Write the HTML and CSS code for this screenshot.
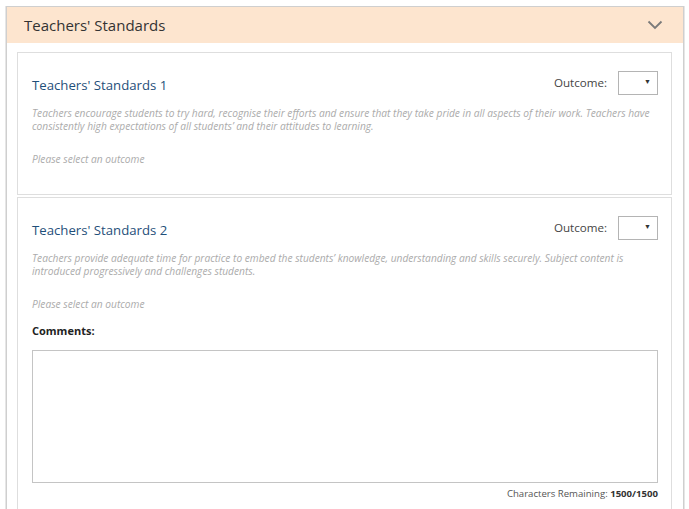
FILE: index.html
```html
<!DOCTYPE html>
<html lang="en">
<head>
    <meta charset="UTF-8">
    <meta name="viewport" content="width=device-width, initial-scale=1.0">
    <title>Teachers' Standards</title>
    <link rel="stylesheet" href="styles.css">
</head>
<body>
    <div class="panel">
        <div class="panel-heading">
            <h2>Teachers' Standards</h2>
            <svg class="chevron" width="16" height="10" viewBox="0 0 16 10">
                <path d="M1.5 1.5 L8 8 L14.5 1.5" fill="none" stroke="#7a7a7a" stroke-width="1.8"/>
            </svg>
        </div>
        <div class="panel-body">
            <div class="standard">
                <div class="standard-top">
                    <h3>Teachers' Standards 1</h3>
                    <label class="outcome">
                        Outcome:
                        <span class="select-wrap"><select></select></span>
                    </label>
                </div>
                <p class="description">Teachers encourage students to try hard, recognise their efforts and ensure that they take pride in all aspects of their work. Teachers have consistently high expectations of all students’ and their attitudes to learning.</p>
                <p class="status">Please select an outcome</p>
            </div>
            <div class="standard">
                <div class="standard-top">
                    <h3>Teachers' Standards 2</h3>
                    <label class="outcome">
                        Outcome:
                        <span class="select-wrap"><select></select></span>
                    </label>
                </div>
                <p class="description">Teachers provide adequate time for practice to embed the students’ knowledge, understanding and skills securely. Subject content is introduced progressively and challenges students.</p>
                <p class="status">Please select an outcome</p>
                <div class="comments">
                    <label for="comments-2">Comments:</label>
                    <textarea id="comments-2"></textarea>
                    <div class="remaining">Characters Remaining: <b>1500/1500</b></div>
                </div>
            </div>
        </div>
    </div>
</body>
</html>
```

FILE: styles.css
```css
body {
    font-family: 'Open Sans', 'Liberation Sans', sans-serif;
    background-color: #fff;
    color: #333;
    margin: 0;
    padding: 6px 5px 0 6px;
}
.panel {
    border: 1px solid #cfcfcf;
    border-bottom: none;
    box-shadow: -1px 0 0 #e6e6e6, 1px 0 0 #e6e6e6;
}
.panel-heading {
    background-color: #fde5cf;
    height: 36px;
    padding: 0 20px 0 17px;
    display: flex;
    align-items: center;
    justify-content: space-between;
}
.panel-heading h2 {
    margin: 0;
    font-size: 15px;
    font-weight: normal;
    color: #333;
}
.chevron {
    display: block;
}
.panel-body {
    padding: 9px 11px 0 10px;
}
.standard {
    border: 1px solid #dedede;
    padding: 18px 13px 28px 14px;
    margin-bottom: 2px;
}
.standard-top {
    display: flex;
    justify-content: space-between;
    align-items: flex-start;
}
.standard h3 {
    margin: 4px 0 0;
    font-size: 13.2px;
    line-height: 20px;
    font-weight: normal;
    color: #1f4f7a;
}
.outcome {
    display: flex;
    align-items: center;
    gap: 11px;
    margin-top: -2px;
    font-size: 11.6px;
    color: #444;
}
.select-wrap {
    position: relative;
    display: block;
    margin-top: 2px;
}
.select-wrap select {
    display: block;
    appearance: none;
    -webkit-appearance: none;
    width: 40px;
    height: 24px;
    border: 1px solid #b4b4b4;
    border-radius: 0;
    background: #fff;
    margin: 0;
}
.select-wrap::after {
    content: "▼";
    position: absolute;
    right: 7px;
    top: 6px;
    font-size: 7px;
    color: #333;
    pointer-events: none;
}
.description {
    margin: 12px 0 0;
    font-size: 10.2px;
    line-height: 12.5px;
    font-style: italic;
    color: #ababab;
}
.status {
    margin: 21px 0 0;
    font-size: 10.2px;
    line-height: 13px;
    font-style: italic;
    color: #ababab;
}
.comments {
    margin-top: 12px;
}
.comments label {
    display: block;
    font-size: 11px;
    font-weight: bold;
    line-height: 15px;
    color: #222;
}
.comments textarea {
    display: block;
    box-sizing: border-box;
    width: 100%;
    height: 133px;
    margin-top: 12px;
    border: 1px solid #c4c4c4;
    resize: none;
}
.remaining {
    margin-top: 4px;
    text-align: right;
    font-size: 9.6px;
    line-height: 13px;
    color: #555;
}
.remaining b {
    color: #333;
}
```
